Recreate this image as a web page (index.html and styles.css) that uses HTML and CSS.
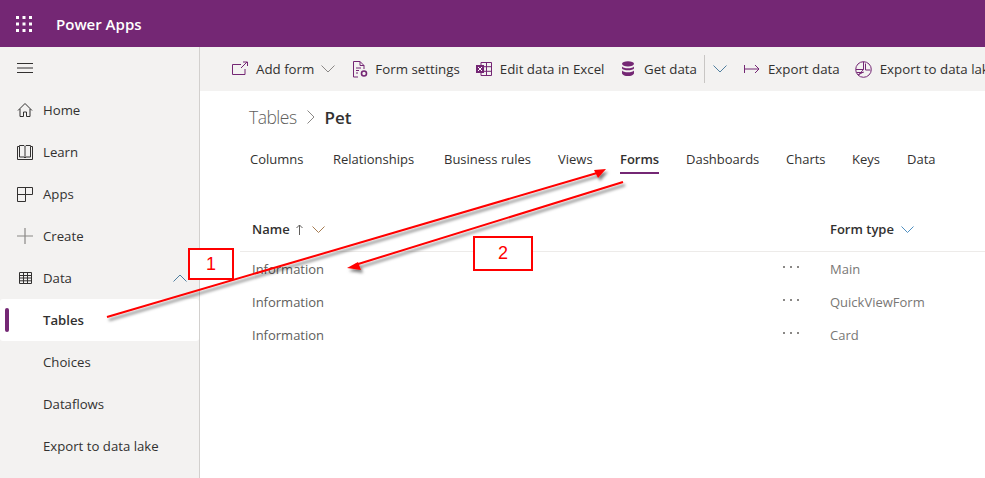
FILE: index.html
```html
<!DOCTYPE html>
<html lang="en">
<head>
<meta charset="utf-8">
<title>Power Apps</title>
<link rel="stylesheet" href="styles.css">
</head>
<body>
<header class="topbar">
  <svg class="waffle" width="16" height="16" viewBox="0 0 16 16"><g fill="#fff"><rect x="0" y="0" width="3" height="3"/><rect x="6.500" y="0" width="3" height="3"/><rect x="13" y="0" width="3" height="3"/><rect x="0" y="6.500" width="3" height="3"/><rect x="6.500" y="6.500" width="3" height="3"/><rect x="13" y="6.500" width="3" height="3"/><rect x="0" y="13" width="3" height="3"/><rect x="6.500" y="13" width="3" height="3"/><rect x="13" y="13" width="3" height="3"/></g></svg>
  <span class="brand">Power Apps</span>
</header>
<div class="shell">
  <nav class="sidebar">
    <div class="nav-row"><svg class="nav-icon" width="16" height="16" viewBox="0 0 16 16"><path d="M0 3.500h16M0 8h16M0 12.500h16" stroke="#323130" fill="none"/></svg></div>
    <a class="nav-row"><svg class="nav-icon" width="16" height="16" viewBox="0 0 16 16"><path d="M1 8.500 8 1.500l7 7M3 7v7.500h3.500V10h3v4.500H13V7" stroke="#323130" fill="none"/></svg><span>Home</span></a>
    <a class="nav-row"><svg class="nav-icon" width="16" height="16" viewBox="0 0 16 16"><path d="M.5 2.500h2v-1H7L8 2.500l1-1h4.500v1h2v13H.5zM2.500 2.500v10.500H7l1 1 1-1h4.500V2.500M8 2.500V14" stroke="#323130" fill="none"/></svg><span>Learn</span></a>
    <a class="nav-row"><svg class="nav-icon" width="16" height="16" viewBox="0 0 16 16"><path d="M.5 1.500h15v7H8.500v7H.5zM.5 8.500h8M8.500 1.500v7" stroke="#323130" fill="none"/></svg><span>Apps</span></a>
    <a class="nav-row"><svg class="nav-icon" width="16" height="16" viewBox="0 0 16 16"><path d="M8 0v16M0 8h16" stroke="#8a8886" stroke-width="1.200" fill="none"/></svg><span>Create</span></a>
    <a class="nav-row"><svg class="nav-icon" width="16" height="16" viewBox="0 0 16 16"><path d="M2.500 2.500h12v11h-12zM2.500 5.500h12M2.500 8h12M2.500 10.800h12M6.500 2.500v11M10.500 2.500v11" stroke="#323130" fill="none"/></svg><span>Data</span><svg class="nav-caret" width="14" height="8" viewBox="0 0 14 8"><path d="M.5 7.500 7 1l6.500 6.500" stroke="#4f7f9f" fill="none"/></svg></a>
    <a class="nav-row sub active"><span>Tables</span></a>
    <a class="nav-row sub"><span>Choices</span></a>
    <a class="nav-row sub"><span>Dataflows</span></a>
    <a class="nav-row sub"><span>Export to data lake</span></a>
  </nav>
  <main class="content">
    <div class="commandbar">
      <svg class="cmd-icon" width="16" height="16" viewBox="0 0 16 16"><path d="M9 3.500H.5v10h12.500V8M9 7l6-6M11 1h4.500v4" stroke="#742774" fill="none"/></svg>
      <span class="cmd-label">Add form</span>
      <svg class="chev cmd-chev" width="14" height="8" viewBox="0 0 14 8"><path d="M.5.500 7 7l6.500-6.500" stroke="#8a8886" fill="none"/></svg>
      <svg class="cmd-icon form-icon" width="16" height="17" viewBox="0 0 16 17"><path d="M1.500.500H8L12 4.500V8M8 .500v4h4M6 16H1.500V.500M4 7h5M4 9.500h3M4 12h2" stroke="#742774" fill="none"/><circle cx="12" cy="12.500" r="2.500" stroke="#742774" stroke-width="1.600" fill="none"/></svg>
      <span class="cmd-label form-label">Form settings</span>
      <svg class="cmd-icon excel-icon" width="16" height="14" viewBox="0 0 16 14"><path d="M5 .500h10.500v13H5zM5 4.700h10.500M5 9.300h10.500M10.500.500v13" stroke="#742774" fill="none"/><rect x="0" y="3" width="8" height="8" fill="#742774"/><path d="M2 5l4 4M6 5 2 9" stroke="#fff" fill="none"/></svg>
      <span class="cmd-label">Edit data in Excel</span>
      <svg class="cmd-icon db-icon" width="14" height="16" viewBox="0 0 14 16"><ellipse cx="7" cy="2.800" rx="6" ry="2.600" fill="#742774"/><path d="M1 5.500c1 2.400 11 2.400 12 0v2c-1 2.400-11 2.400-12 0zM1 9.500c1 2.400 11 2.400 12 0v3c-1 3.400-11 3.400-12 0z" fill="#742774"/></svg>
      <span class="cmd-label db-label">Get data</span>
      <span class="divider"></span>
      <svg class="chev split-chev" width="14" height="8" viewBox="0 0 14 8"><path d="M.5.500 7 7l6.500-6.500" stroke="#4f7f9f" fill="none"/></svg>
      <svg class="cmd-icon export-icon" width="16" height="10" viewBox="0 0 16 10"><path d="M.5 1v8M1 5h14M11 1l4 4-4 4" stroke="#742774" fill="none"/></svg>
      <span class="cmd-label">Export data</span>
      <svg class="cmd-icon lake-icon" width="17" height="17" viewBox="0 0 17 17"><circle cx="8.500" cy="8.500" r="7.800" stroke="#742774" fill="none"/><path d="M8.500.700V8.500H1M8.500 8.500l-5 5.500M1.500 11.500h7M3 14l5.500-3M10.500 2.500v6.500h5" stroke="#742774" fill="none"/></svg>
      <span class="cmd-label">Export to data lake</span>
    </div>
    <div class="crumbs">
      <span class="crumb-parent">Tables</span>
      <svg width="8" height="14" viewBox="0 0 8 14"><path d="M.5.500 7 7 .5 13.500" stroke="#8a8886" fill="none"/></svg>
      <strong class="crumb-current">Pet</strong>
    </div>
    <div class="tabs">
      <span class="tab">Columns</span>
      <span class="tab">Relationships</span>
      <span class="tab">Business rules</span>
      <span class="tab">Views</span>
      <span class="tab selected">Forms</span>
      <span class="tab">Dashboards</span>
      <span class="tab">Charts</span>
      <span class="tab">Keys</span>
      <span class="tab">Data</span>
    </div>
    <div class="grid">
      <div class="grid-row grid-head">
        <span class="col-name">Name <svg class="sort" width="7" height="11" viewBox="0 0 7 11"><path d="M3.500 11V1M.5 4l3-3 3 3" stroke="#605e5c" fill="none"/></svg><svg class="head-chev name-chev" width="13" height="7" viewBox="0 0 13 7"><path d="M.5.500l6 6 6-6" stroke="#a67c52" fill="none"/></svg></span>
        <span></span>
        <span class="col-type">Form type<svg class="head-chev" width="13" height="7" viewBox="0 0 13 7"><path d="M.5.500l6 6 6-6" stroke="#4f8fc0" fill="none"/></svg></span>
      </div>
      <div class="grid-row"><span>Information</span><span class="more"><i></i><i></i><i></i></span><span class="type">Main</span></div>
      <div class="grid-row"><span>Information</span><span class="more"><i></i><i></i><i></i></span><span class="type">QuickViewForm</span></div>
      <div class="grid-row"><span>Information</span><span class="more"><i></i><i></i><i></i></span><span class="type">Card</span></div>
    </div>
  </main>
</div>
<svg class="arrows" width="985" height="478" viewBox="0 0 985 478">
  <defs>
    <filter id="ds" x="-5%" y="-20%" width="110%" height="140%"><feDropShadow dx="2" dy="3" stdDeviation="1.500" flood-color="#000" flood-opacity=".5"/></filter>
  </defs>
  <g filter="url(#ds)">
    <path d="M107 317 597 173" stroke="#f00" stroke-width="2" fill="none"/>
    <path d="M606 169 594 170 598 178z" fill="#f00"/>
    <path d="M623 182 355 265" stroke="#f00" stroke-width="2" fill="none"/>
    <path d="M347 268 358 262 361 270z" fill="#f00"/>
  </g>
</svg>
<div class="callout callout-one">1</div>
<div class="callout callout-two">2</div>
</body>
</html>
```
FILE: styles.css
```css
* { box-sizing: border-box; }
html, body { margin: 0; padding: 0; width: 985px; height: 478px; overflow: hidden; background: #fff; }
body { font-family: "Open Sans", "Noto Sans", sans-serif; font-size: 13.200px; color: #323130; position: relative; }
svg { display: block; flex: none; }

.topbar { height: 47px; background: #742774; display: flex; align-items: center; color: #fff; }
.waffle { margin-left: 16px; }
.brand { margin-left: 24px; font-size: 15px; font-weight: 600; }

.shell { display: flex; height: 431px; }
.sidebar { width: 200px; flex: none; background: #f3f2f1; border-right: 1px solid #d2d0ce; }
.nav-row { height: 42px; display: flex; align-items: center; padding-left: 17px; position: relative; }
.nav-icon { margin-right: 10px; }
.nav-caret { position: absolute; left: 173px; top: 17px; }
.sub { padding-left: 43px; }
.active { background: #fff; font-weight: 600; width: 199px; border-radius: 3px; }
.active::before { content: ""; position: absolute; left: 5px; top: 9px; width: 4px; height: 24px; border-radius: 2px; background: #742774; }

.content { flex: 1; min-width: 0; overflow: hidden; }
.commandbar { height: 44px; background: #f3f2f1; display: flex; align-items: center; padding-left: 32px; white-space: nowrap; font-size: 13.300px; }
.cmd-label { margin-left: 8px; flex: none; }
.cmd-chev { margin-left: 7px; }
.form-icon { margin-left: 17px; }
.form-label { margin-left: 7px; }
.excel-icon { margin-left: 16px; }
.db-icon { margin-left: 16.500px; }
.db-label { margin-left: 9px; }
.divider { flex: none; width: 1px; height: 28px; background: #c8c6c4; margin-left: 7px; }
.split-chev { margin-left: 8px; }
.export-icon { margin-left: 17px; }
.lake-icon { margin-left: 15px; }

.crumbs { display: flex; align-items: center; margin: 14px 0 0 49px; height: 24px; }
.crumb-parent { font-size: 17.500px; letter-spacing: -.5px; font-weight: 300; color: #605e5c; margin-right: 10px; }
.crumb-current { font-size: 17px; font-weight: 600; margin-left: 10px; }

.tabs { display: grid; grid-template-columns: 83px 111px 114px 62px 66px 100px 66px 55px auto; margin: 21px 0 0 50px; height: 28px; font-size: 13px; }
.tab { height: 24px; line-height: 18px; border-bottom: 2px solid transparent; justify-self: start; }
.selected { font-weight: 600; border-bottom-color: #742774; }

.grid { margin: 29px 0 0 40px; font-size: 13px; }
.grid-row { display: grid; grid-template-columns: 531px 47px 1fr; height: 33px; align-items: center; padding-left: 12px; color: #605e5c; }
.grid-head { height: 45px; border-bottom: 1px solid #edebe9; color: #323130; font-weight: 600; }
.col-name, .col-type { display: flex; align-items: center; }
.sort { margin-left: 6px; }
.head-chev { margin-left: 7px; }
.name-chev { margin-left: 9px; }
.more { display: flex; gap: 5px; }
.more i { width: 2px; height: 2px; background: #8a8886; margin-bottom: 3px; }
.type { color: #797775; }

.arrows { position: absolute; left: 0; top: 0; pointer-events: none; }
.callout { position: absolute; border: 2px solid #f00; background: #fff; color: #f00; font-family: "Liberation Sans", Arial, sans-serif; font-size: 18px; display: flex; align-items: center; justify-content: center; }
.callout-one { left: 188px; top: 248px; width: 46px; height: 32px; }
.callout-two { left: 473px; top: 236px; width: 60px; height: 35px; }
```
